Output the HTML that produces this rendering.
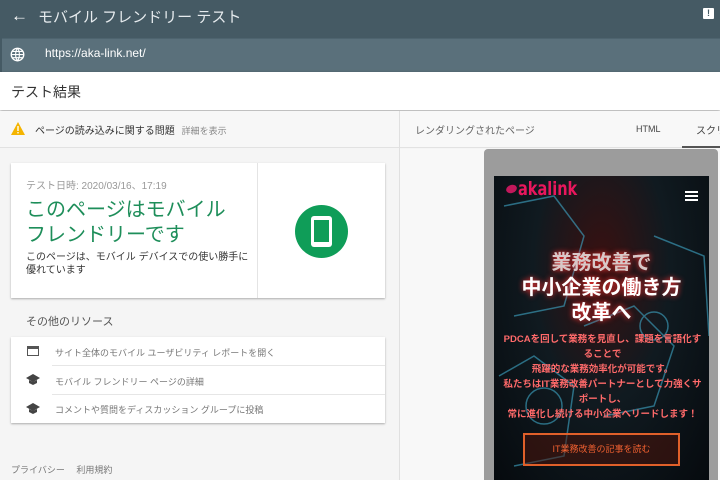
<!DOCTYPE html>
<html><head><meta charset="utf-8"><style>
*{margin:0;padding:0;box-sizing:border-box}
body{width:720px;height:480px;overflow:hidden;background:#f5f5f5;font-family:"Liberation Sans","Noto Sans CJK JP",sans-serif;position:relative}
.abs{position:absolute}
</style></head><body>
<div class="abs" style="left:0;top:0;width:720px;height:38px;background:#455a64"></div>
<div class="abs" style="left:11px;top:6px;color:#fff;font-size:17px">←</div>
<div class="abs" style="left:38px;top:6px;color:#e6ebee;font-size:15px">モバイル フレンドリー テスト</div>
<div class="abs" style="left:703px;top:8px;width:11px;height:11px;background:#fff;border-radius:1px;color:#455a64;font-size:9px;font-weight:bold;text-align:center;line-height:11px">!</div>
<div class="abs" style="left:0;top:38px;width:720px;height:34px;background:#5a707b;border-top:1px solid #4e646f"></div>
<div class="abs" style="left:0;top:38px;width:2px;height:34px;background:#455a64"></div>
<svg class="abs" style="left:10px;top:47px" width="15" height="15" viewBox="0 0 24 24"><circle cx="12" cy="12" r="10" fill="none" stroke="#fff" stroke-width="2.2"/><path d="M2 12h20M12 2c-4 5-4 15 0 20M12 2c4 5 4 15 0 20M4 7h16M4 17h16" fill="none" stroke="#fff" stroke-width="1.8"/></svg>
<div class="abs" style="left:45px;top:46px;color:#fff;font-size:12px">https://aka-link.net/</div>
<div class="abs" style="left:0;top:72px;width:720px;height:38px;background:#fff;box-shadow:0 1px 3px rgba(0,0,0,.35)"></div>
<div class="abs" style="left:11px;top:82px;color:#333;font-size:14px">テスト結果</div>
<div class="abs" style="left:0;top:111px;width:399px;height:37px;background:#f7f7f7;border-bottom:1px solid #e2e2e2"></div>
<svg class="abs" style="left:11px;top:122px" width="14" height="13" viewBox="0 0 14 13"><path d="M7 0L14 13H0Z" fill="#f4b400"/><rect x="6.3" y="4" width="1.4" height="5" fill="#fff"/><rect x="6.3" y="10" width="1.4" height="1.4" fill="#fff"/></svg>
<div class="abs" style="left:35px;top:122px;color:#333;font-size:10px">ページの読み込みに関する問題 <span style="color:#888;font-size:9px;margin-left:4px">詳細を表示</span></div>
<div class="abs" style="left:11px;top:163px;width:374px;height:135px;background:#fff;box-shadow:0 1px 2px rgba(0,0,0,.3)"></div>
<div class="abs" style="left:257px;top:163px;width:1px;height:135px;background:#e4e4e4"></div>
<div class="abs" style="left:26px;top:177px;color:#999;font-size:10px">テスト日時: 2020/03/16、17:19</div>
<div class="abs" style="left:26px;top:198px;color:#1e8e5a;font-size:20px;line-height:25px">このページはモバイル<br>フレンドリーです</div>
<div class="abs" style="left:26px;top:251px;color:#333;font-size:10px;line-height:13px">このページは、モバイル デバイスでの使い勝手に<br>優れています</div>
<div class="abs" style="left:295px;top:205px;width:53px;height:53px;border-radius:50%;background:#0f9d58"></div>
<div class="abs" style="left:311px;top:216px;width:21px;height:31px;border-radius:3px;background:#fff"></div>
<div class="abs" style="left:314px;top:220px;width:15px;height:22px;background:#0f9d58"></div>
<div class="abs" style="left:26px;top:313px;color:#555;font-size:11px">その他のリソース</div>
<div class="abs" style="left:11px;top:337px;width:374px;height:86px;background:#fff;box-shadow:0 1px 2px rgba(0,0,0,.3)"></div>
<div class="abs" style="left:52px;top:365px;width:333px;height:1px;background:#e6e6e6"></div>
<div class="abs" style="left:52px;top:394px;width:333px;height:1px;background:#e6e6e6"></div>
<div class="abs" style="left:27px;top:346px;width:12px;height:10px;border:1.5px solid #555;border-top-width:3px"></div>
<svg class="abs" style="left:26px;top:374px" width="14" height="11" viewBox="0 0 14 11"><path d="M7 0L14 4 7 8 0 4Z M3 6v3l4 2 4-2V6L7 8Z" fill="#444"/></svg>
<svg class="abs" style="left:26px;top:403px" width="14" height="11" viewBox="0 0 14 11"><path d="M7 0L14 4 7 8 0 4Z M3 6v3l4 2 4-2V6L7 8Z" fill="#444"/></svg>
<div class="abs" style="left:55px;top:346px;color:#777;font-size:9px">サイト全体のモバイル ユーザビリティ レポートを開く</div>
<div class="abs" style="left:55px;top:375px;color:#777;font-size:9px">モバイル フレンドリー ページの詳細</div>
<div class="abs" style="left:55px;top:403px;color:#777;font-size:9px">コメントや質問をディスカッション グループに投稿</div>
<div class="abs" style="left:11px;top:463px;color:#777;font-size:9px">プライバシー　 利用規約</div>
<div class="abs" style="left:399px;top:111px;width:1px;height:369px;background:#e0e0e0"></div>
<div class="abs" style="left:400px;top:111px;width:320px;height:37px;background:#f8f8f8;border-bottom:1px solid #e2e2e2"></div>
<div class="abs" style="left:415px;top:122px;color:#666;font-size:10px">レンダリングされたページ</div>
<div class="abs" style="left:636px;top:124px;color:#444;font-size:9px">HTML</div>
<div class="abs" style="left:696px;top:122px;color:#444;font-size:10px;white-space:nowrap">スクリ</div>
<div class="abs" style="left:682px;top:146px;width:38px;height:2px;background:#555"></div>
<div class="abs" style="left:400px;top:149px;width:320px;height:331px;background:#f8f8f8"></div>
<div class="abs" style="left:484px;top:149px;width:234px;height:331px;background:#9c9c9c;border-radius:4px 4px 0 0"></div>
<div class="abs" style="left:494px;top:176px;width:215px;height:304px;background:radial-gradient(ellipse at 50% 30%,#3a1010 0%,#101a20 45%,#060a0e 100%)"></div>
<svg class="abs" style="left:494px;top:176px" width="215" height="304" viewBox="0 0 215 304"><g fill="none" stroke="#3fa9c9" stroke-width="1.5" opacity=".6"><path d="M10 30L60 20 90 60 70 130 20 140"/><path d="M90 150L140 130 180 170 160 230 110 240"/><path d="M160 60L210 80 215 160"/><path d="M5 200L40 180 80 210 70 280 20 290"/><circle cx="50" cy="230" r="18"/><circle cx="160" cy="150" r="14"/></g></svg>
<div class="abs" style="left:518px;top:178px;color:#e8175d;font-size:19px;font-weight:bold;letter-spacing:0;font-family:'DejaVu Sans Condensed','Liberation Sans',sans-serif;transform:scaleX(.85);transform-origin:left">akalink</div>
<div class="abs" style="left:506px;top:185px;width:11px;height:8px;border-radius:50%;background:#c2185b;transform:rotate(-20deg)"></div>
<div class="abs" style="left:685px;top:191px;width:13px;height:2px;background:#fff;box-shadow:0 4px 0 #fff,0 8px 0 #fff"></div>
<div class="abs" style="left:494px;top:251px;width:215px;text-align:center;color:#d8c8c8;font-size:20px;font-weight:bold;line-height:25px;text-shadow:0 0 6px #f33">業務改善で<br><span style="color:#fff">中小企業の働き方<br>改革へ</span></div>
<div class="abs" style="left:500px;top:332px;width:205px;text-align:center;color:#ff6a6a;font-size:9.5px;font-weight:bold;line-height:15px">PDCAを回して業務を見直し、課題を言語化することで<br>飛躍的な業務効率化が可能です。<br>私たちはIT業務改善パートナーとして力強くサポートし、<br>常に進化し続ける中小企業へリードします！</div>
<div class="abs" style="left:523px;top:433px;width:157px;height:33px;border:2px solid #e0602a;background:rgba(80,20,10,.5);color:#f06030;font-size:9px;text-align:center;line-height:29px">IT業務改善の記事を読む</div>
</body></html>
